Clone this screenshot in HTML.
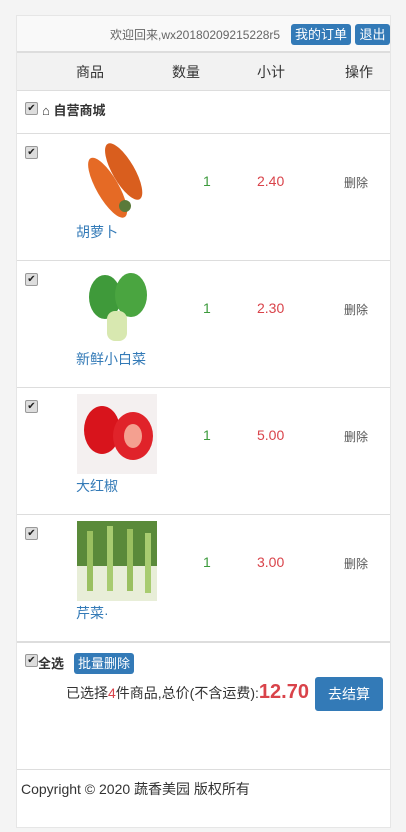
<!DOCTYPE html>
<html><head><meta charset="utf-8"><style>
body{margin:0;background:#f4f4f4;font-family:"Liberation Sans","Noto Sans CJK SC",sans-serif;font-size:13px;color:#333;}
.c{position:absolute;left:16px;top:15px;width:375px;height:813px;background:#fff;border:1px solid #e6e6e6;box-sizing:border-box;}
.a{position:absolute;}
.btn{background:#337ab7;color:#fff;border-radius:3px;text-align:center;}
.cb{position:absolute;width:11px;height:11px;border:1px solid #999;border-radius:2px;background:#ddd;font-size:10px;line-height:11px;text-align:center;color:#222;}
.row{position:absolute;left:0;width:373px;border-bottom:1px solid #ddd;height:126px;}
.n{position:absolute;left:59px;top:88px;color:#337ab7;font-size:14px;}
.q{position:absolute;left:186px;top:39px;color:#3c9a3c;font-size:14px;}
.s{position:absolute;left:240px;top:39px;color:#d9434a;font-size:14px;}
.d{position:absolute;left:327px;top:40px;color:#555;font-size:12px;}
</style></head><body>
<div class="c">
 <div class="a" style="left:0;top:0;width:373px;height:35px;background:#f9f9f9;border-bottom:1px solid #ddd;"></div>
 <div class="a" style="left:93px;top:10px;color:#666;font-size:12px;">欢迎回来,wx20180209215228r5</div>
 <div class="a btn" style="left:274px;top:8px;width:60px;height:21px;line-height:21px;font-size:13px;">我的订单</div>
 <div class="a btn" style="left:338px;top:8px;width:35px;height:21px;line-height:21px;font-size:13px;">退出</div>
 <div class="a" style="left:0;top:36px;width:373px;height:37px;background:#f2f2f2;border-bottom:1px solid #ddd;border-top:1px solid #ddd;"></div>
 <div class="a" style="left:59px;top:46px;font-size:14px;">商品</div>
 <div class="a" style="left:155px;top:46px;font-size:14px;">数量</div>
 <div class="a" style="left:240px;top:46px;font-size:14px;">小计</div>
 <div class="a" style="left:328px;top:46px;font-size:14px;">操作</div>
 <div class="row" style="top:74px;height:43px;">
  <div class="cb" style="left:8px;top:12px;">✔</div>
  <div class="a" style="left:25px;top:10px;font-size:13px;font-weight:bold;">⌂ 自营商城</div>
 </div>
 <div class="row" style="top:118px;">
  <div class="cb" style="left:8px;top:12px;">✔</div>
  <svg class="a" style="left:60px;top:6px" width="80" height="80"><g transform="rotate(-30 40 40)"><ellipse cx="28" cy="42" rx="11" ry="34" fill="#e56a25"/><ellipse cx="50" cy="36" rx="11" ry="32" fill="#d95e1e"/></g><circle cx="48" cy="66" r="6" fill="#5a7a3a"/></svg>
  <div class="n">胡萝卜</div><div class="q">1</div><div class="s">2.40</div><div class="d">删除</div>
 </div>
 <div class="row" style="top:245px;">
  <div class="cb" style="left:8px;top:12px;">✔</div>
  <svg class="a" style="left:60px;top:6px" width="80" height="80"><ellipse cx="28" cy="30" rx="16" ry="22" fill="#3f9a3a"/><ellipse cx="54" cy="28" rx="16" ry="22" fill="#4aa540"/><rect x="30" y="44" width="20" height="30" rx="8" fill="#d8e8b0"/></svg>
  <div class="n">新鲜小白菜</div><div class="q">1</div><div class="s">2.30</div><div class="d">删除</div>
 </div>
 <div class="row" style="top:372px;">
  <div class="cb" style="left:8px;top:12px;">✔</div>
  <svg class="a" style="left:60px;top:6px" width="80" height="80"><rect width="80" height="80" fill="#f4f0f0"/><ellipse cx="25" cy="36" rx="18" ry="24" fill="#d8141c"/><ellipse cx="56" cy="42" rx="20" ry="24" fill="#e0232a"/><ellipse cx="56" cy="42" rx="9" ry="12" fill="#f4a090"/></svg>
  <div class="n">大红椒</div><div class="q">1</div><div class="s">5.00</div><div class="d">删除</div>
 </div>
 <div class="row" style="top:499px;border-bottom:2px solid #ddd;">
  <div class="cb" style="left:8px;top:12px;">✔</div>
  <svg class="a" style="left:60px;top:6px" width="80" height="80"><rect width="80" height="80" fill="#5a8a3a"/><rect x="0" y="45" width="80" height="35" fill="#e8eed8"/><rect x="10" y="10" width="6" height="60" fill="#9ac060"/><rect x="30" y="5" width="6" height="65" fill="#a8cc70"/><rect x="50" y="8" width="6" height="62" fill="#9ac060"/><rect x="68" y="12" width="6" height="60" fill="#a8cc70"/></svg>
  <div class="n">芹菜·</div><div class="q">1</div><div class="s">3.00</div><div class="d">删除</div>
 </div>
 <div class="cb" style="left:8px;top:638px;">✔</div>
 <div class="a" style="left:21px;top:637px;font-weight:bold;font-size:13px;">全选</div>
 <div class="a btn" style="left:57px;top:637px;width:60px;height:21px;line-height:21px;font-size:13px;">批量删除</div>
 <div class="a" style="left:49px;top:665px;font-size:14px;">已选择<span style="color:#d9434a">4</span>件商品,总价(不含运费):<b style="color:#d9434a;font-size:20px;">12.70</b></div>
 <div class="a btn" style="left:298px;top:661px;width:68px;height:34px;line-height:34px;font-size:14px;">去结算</div>
 <div class="a" style="left:0;top:753px;width:373px;border-top:1px solid #ddd;"></div>
 <div class="a" style="left:4px;top:763px;font-size:14px;">Copyright © 2020 蔬香美园 版权所有</div>
</div>
</body></html>
